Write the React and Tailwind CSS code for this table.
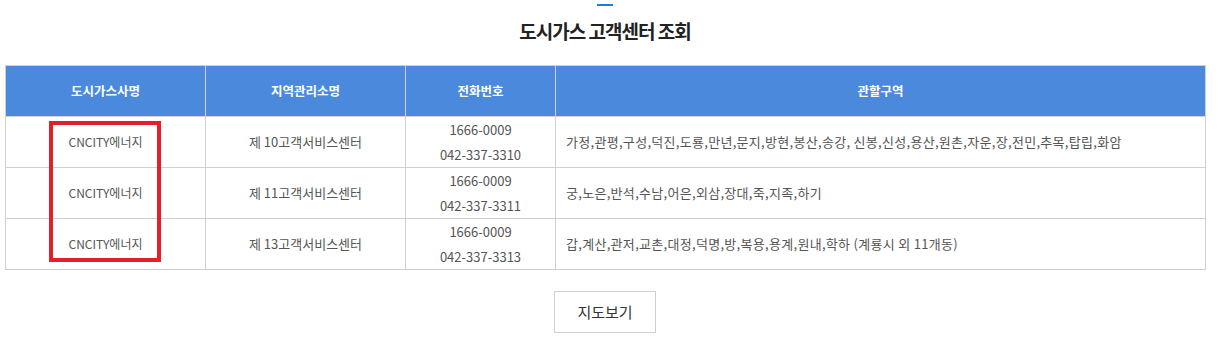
const rows = [
  {
    company: 'CNCITY에너지',
    office: '제 10고객서비스센터',
    phones: ['1666-0009', '042-337-3310'],
    area: '가정,관평,구성,덕진,도룡,만년,문지,방현,봉산,송강, 신봉,신성,용산,원촌,자운,장,전민,추목,탑립,화암',
  },
  {
    company: 'CNCITY에너지',
    office: '제 11고객서비스센터',
    phones: ['1666-0009', '042-337-3311'],
    area: '궁,노은,반석,수남,어은,외삼,장대,죽,지족,하기',
  },
  {
    company: 'CNCITY에너지',
    office: '제 13고객서비스센터',
    phones: ['1666-0009', '042-337-3313'],
    area: '갑,계산,관저,교촌,대정,덕명,방,복용,용계,원내,학하 (계룡시 외 11개동)',
  },
];

export default function App() {
  return (
    <div
      className="w-[1218px] h-[338px] bg-white"
      style={{ fontFamily: '"Noto Sans CJK KR", "Noto Sans", sans-serif' }}
    >
      <div className="relative ml-[5px] w-[1200px] pt-[4px]">
        <div className="mx-auto h-[2px] w-[16px] bg-[#1a7fd8]" />
        <h2 className="mt-[12px] text-center text-[19px] font-bold leading-[26px] tracking-[-1px] text-[#222]">
          도시가스 고객센터 조회
        </h2>

        <table className="mt-[21px] w-[1200px] table-fixed border-collapse text-[13px] text-[#555]">
          <colgroup>
            <col className="w-[200px]" />
            <col className="w-[200px]" />
            <col className="w-[150px]" />
            <col className="w-[650px]" />
          </colgroup>
          <thead>
            <tr className="h-[51px] bg-[#4a89dc] text-[12.5px] text-white">
              <th className="border border-[#d0d0d0] font-bold">도시가스사명</th>
              <th className="border border-[#d0d0d0] font-bold">지역관리소명</th>
              <th className="border border-[#d0d0d0] font-bold">전화번호</th>
              <th className="border border-[#d0d0d0] font-bold">관할구역</th>
            </tr>
          </thead>
          <tbody>
            {rows.map((row) => (
              <tr key={row.office} className="h-[51px]">
                <td className="border border-[#d0d0d0] text-center text-[12px]">{row.company}</td>
                <td className="border border-[#d0d0d0] text-center">{row.office}</td>
                <td className="border border-[#d0d0d0] text-center leading-[25px]">
                  {row.phones.map((p) => (
                    <div key={p}>{p}</div>
                  ))}
                </td>
                <td className="border border-[#d0d0d0] px-[10px] tracking-[0.3px]">{row.area}</td>
              </tr>
            ))}
          </tbody>
        </table>

        {/* highlight box over the company column */}
        <div className="absolute left-[44px] top-[121px] h-[141px] w-[112px] border-[4px] border-[#e1202a]" />

        <div className="mt-[21px] flex justify-center">
          <button className="h-[42px] w-[102px] border border-[#d0d0d0] bg-white text-[15px] text-[#333]">
            지도보기
          </button>
        </div>
      </div>
    </div>
  );
}
